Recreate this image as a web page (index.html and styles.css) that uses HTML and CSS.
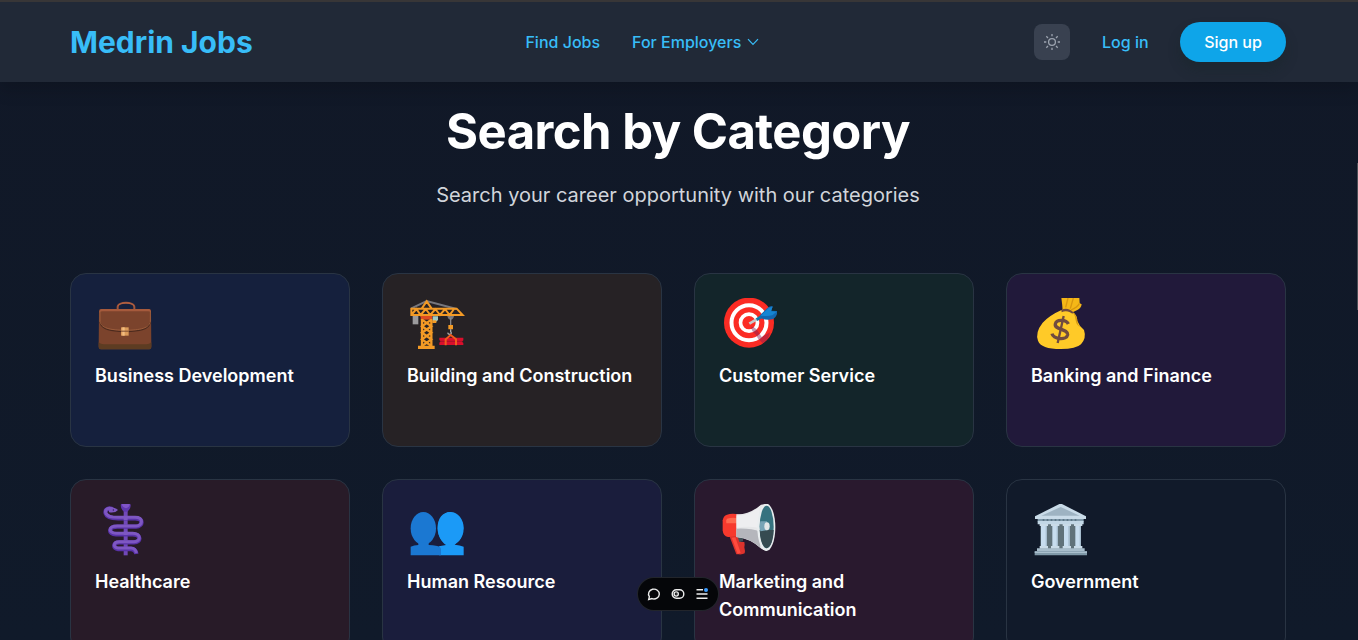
FILE: index.html
```html
<!DOCTYPE html>
<html lang="en">
<head>
<meta charset="utf-8">
<title>Medrin Jobs</title>
<link rel="stylesheet" href="styles.css">
</head>
<body>
<header class="header">
  <a class="logo">Medrin Jobs</a>
  <nav class="nav">
    <a>Find Jobs</a>
    <a class="employers">For Employers
      <svg class="chevron" viewBox="0 0 12 8"><path d="M1 1.2 6 6.4l5-5.2"/></svg>
    </a>
  </nav>
  <div class="actions">
    <button class="theme" aria-label="Theme">
      <svg viewBox="0 0 18 18"><circle cx="9" cy="9" r="3.4"/><path d="M9 1v2.3M9 14.7V17M1 9h2.3M14.7 9H17M3.3 3.3l1.7 1.7M13 13l1.7 1.7M3.3 14.7 5 13M13 5l1.7-1.7"/></svg>
    </button>
    <a class="login">Log in</a>
    <a class="signup">Sign up</a>
  </div>
</header>
<main class="main">
  <h1 class="title">Search by Category</h1>
  <p class="subtitle">Search your career opportunity with our categories</p>
  <section class="grid">
    <article class="card blue">
      <svg class="icon" viewBox="21 24 180 156">
        <path d="M89 60v-9c0-17 50-17 50 0v9" fill="none" stroke="#a3563a" stroke-width="6"/>
        <path d="M91 47c7-11 38-11 46 0" fill="none" stroke="#c0694a" stroke-width="2"/>
        <path d="M38 57h146q5 0 5 6l1 105q0 10-6 10H38q-6 0-6-10l1-105q0-6 5-6z" fill="#7b432c"/>
        <path d="M32 157q6 6 16 6h127q9 0 15-6v14q0 7-6 7H39q-7 0-7-7z" fill="#5d3c22"/>
        <path d="M34 68q0-11 7-11h141q7 0 7 11-3-4-9-4H44q-6 0-10 4z" fill="#a65a3c"/>
        <path d="M36 96c5 24 35 28 76 29 41-1 70-5 75-29" fill="none" stroke="#4c2a1d" stroke-width="4"/>
        <path d="M36 64v26c0 26 32 30 76 31 44-1 75-5 75-31V64" fill="none" stroke="#a2623f" stroke-width="2.5"/>
        <path d="M99 112h23v25H99z" fill="#dc9b5a"/><path d="M103 112h7v25h-7z" fill="#f4bd80"/><path d="M99 122h23v3H99z" fill="#7b4930"/>
      </svg>
      <h2>Business Development</h2>
    </article>
    <article class="card orange">
      <svg class="icon" viewBox="21 24 180 156">
        <path d="M34 55 80 33l90 24" fill="none" stroke="#77777d" stroke-width="6"/>
        <path d="M38 78h17v25H38z" fill="#9b9b9d"/><path d="M142 78h20q-2 11-10 11t-10-11z" fill="#77777b"/>
        <path d="M152 84v22" stroke="#88888b" stroke-width="4"/>
        <path d="M34 56h136l18 19H34zM34 75l15-18 13 18 15-18 14 18 15-18 14 18 15-18 14 18 13-18M65 56l15-22 15 22" fill="none" stroke="#f39a25" stroke-width="6"/>
        <path d="M62 78h35v11H62z" fill="#df4b20"/><path d="M98 79h16v10q-4 8-16 8z" fill="#9ecbc7"/><path d="M97 91h12v8H97z" fill="#f39a25"/>
        <path d="M66 87v82M94 87v82M66 89l28 20-28 19 28 20-28 20M94 89l-28 20 28 19-28 20 28 20" fill="none" stroke="#f39a25" stroke-width="7"/>
        <path d="M54 167h50v10H54zM145 105h14v13h-14z" fill="#f39a25"/>
        <path d="M152 118v7q5 7-3 8-6-1-5-5" fill="none" stroke="#aaa9aa" stroke-width="4"/>
        <path d="M118 143h72v8l-4 4 4 4v6h-72v-7l4-4-4-4z" fill="#d90f2c"/><path d="M122 154h65" stroke="#8e1328" stroke-width="2"/>
        <path d="M137 166v-18l15-13 16 13v18" fill="none" stroke="#f25b1d" stroke-width="6"/>
      </svg>
      <h2>Building and Construction</h2>
    </article>
    <article class="card green">
      <svg class="icon" viewBox="27 24 180 156">
        <circle cx="117" cy="98" r="75" fill="#fb2c24"/><circle cx="117" cy="98" r="52.5" fill="none" stroke="#fff" stroke-width="12"/><circle cx="117" cy="98" r="25.5" fill="none" stroke="#fff" stroke-width="11"/>
        <path d="M124 110q10 0 18 11l13 20 25-14q-4 22-22 33-14-10-22-28-12-8-12-22z" fill="#831d55" opacity=".45"/>
        <path d="m118 101 27-16" stroke="#c7c9ca" stroke-width="8"/><path d="m140 89 21-14" stroke="#087aae" stroke-width="9"/>
        <path d="m150 76 22-22q9-7 16-6l-4 14q9 0 17 1v9q-5 13-14 16-18 4-34-3z" fill="#1267b1"/><path d="m151 78 25-24 12-4-5 14 17 1-13 11q-16 4-30 1z" fill="#1685d3"/>
      </svg>
      <h2>Customer Service</h2>
    </article>
    <article class="card purple">
      <svg class="icon" viewBox="21 24 180 156">
        <path d="M112 23h54l1 17 6 3q-2 13-13 17l-17 8q-14-9-27-6-1-17-4-39z" fill="#f5b717"/>
        <path d="m132 24-7 28M148 24l-9 32M166 41q-7 12-25 19" stroke="#d89610" stroke-width="4" fill="none"/>
        <path d="M111 61q17-8 35 5 13 8 14 27 6 16 20 27 8 24-9 43-14 14-61 14-59 0-68-25-9-25 14-54 23-23 55-37z" fill="#ffca28"/>
        <path d="M146 67q14 10 14 27 1 11 9 17-12-5-14-20-1-14-9-24z" fill="#d79b13"/>
        <path d="M112 60q18-11 38 8-6 5-12-1-13-7-25 0z" fill="#704b40"/>
        <path d="M133 102c-6-14-36-15-39 0-4 18 39 14 37 32-3 17-42 15-47-3" fill="none" stroke="#704b40" stroke-width="10"/><path d="m119 78-18 81" fill="none" stroke="#704b40" stroke-width="7"/>
      </svg>
      <h2>Banking and Finance</h2>
    </article>
    <article class="card red">
      <svg class="icon" viewBox="21 24 180 156">
        <path d="M107 44h12v134h-12z" fill="#7148b8"/>
        <path d="M77 43c-13-11-27-3-24 9 4 13 19 15 37 15h51c27 0 24 24 3 25H88c-28 0-28 22-4 23h50c26 1 26 23 4 24H94c-19 0-20 19-4 20h39q14 1 16 15" fill="none" stroke="#5932a7" stroke-width="13"/>
        <path d="M77 42c-13-11-27-3-24 8 4 13 19 14 37 14h51c27 0 24 25 3 26H88c-28 0-28 21-4 22h50c26 1 26 24 4 25H94c-19 0-20 18-4 19h39q14 1 16 15" fill="none" stroke="#7e57c2" stroke-width="9"/>
        <path d="M99 24h28q4 12-9 23h-10q-12-10-9-23z" fill="#6038ae"/><path d="M102 24h23q1 8-11 13-13-4-12-13z" fill="#8055c7"/>
        <path d="M62 34q18-1 28 8-8 10-27 7z" fill="#7e57c2"/><circle cx="76" cy="42" r="2" fill="#311656"/><path d="M107 60h12v12h-12zM107 107h12v10h-12z" fill="#7e57c2"/>
      </svg>
      <h2>Healthcare</h2>
    </article>
    <article class="card indigo">
      <svg class="icon" viewBox="21 24 180 156">
        <path d="M151 48c-23 0-38 19-38 47 0 24 11 42 25 52l-21 4v27h74v-26q-11-5-27-6 26-18 26-51 0-30-39-47z" fill="#1b9af7"/><ellipse cx="152" cy="97" rx="39" ry="49" fill="#1b9af7"/>
        <ellipse cx="70" cy="97" rx="38" ry="49" fill="#1b78d2"/><path d="M55 140h31v7q26 1 34 6 4 5 3 11v14H32v-26q10-4 23-5z" fill="#1b78d2"/>
      </svg>
      <h2>Human Resource</h2>
    </article>
    <article class="card pink">
      <svg class="icon" viewBox="27 24 180 156">
        <path d="M59 122h26l7 16h11l1 8-1 8 2 11-1 7q-6 4-18 3H79q-8-22-20-53z" fill="#dd332d"/><path d="m65 125 11-1 16 46-9 4z" fill="#ff4b3e"/><path d="M83 122h16v14l-11 2z" fill="#455158"/>
        <path d="M51 56q14-5 35-1v67l-32 1q-15-3-16-20V73q2-13 13-17z" fill="#f7392d"/><path d="M51 68q17-5 31-1l-1 15H49q-2-11 2-14z" fill="#ff694f"/>
        <path d="M79 55q38 2 74-29l18-2v141l-16-6q-34-32-76-36z" fill="#e6e7e9"/><path d="M79 98q44-2 72 9v48q-34-30-72-32z" fill="#b5b6bc"/><path d="M80 59q40 1 70-29l-5 65q-30-6-65 0z" fill="#eeeef0"/>
        <ellipse cx="169" cy="94" rx="27" ry="71" fill="#e9edef"/><ellipse cx="170" cy="93" rx="21" ry="64" fill="#35727f"/>
        <path d="M149 102q2 48 21 55 19-7 21-55z" fill="#364b51"/><path d="M151 76h20v27l-20 3q-3-15 0-30z" fill="#78a4b6"/><ellipse cx="171" cy="91" rx="8" ry="12" fill="#e3e7e8"/>
      </svg>
      <h2>Marketing and Communication</h2>
    </article>
    <article class="card gray">
      <svg class="icon" viewBox="21 24 180 156">
        <path d="M49 80h121v79H49z" fill="#60727a"/><path d="m110 22 76 39v8H33v-8z" fill="#c9dbe8"/><path d="m110 33 57 26H52z" fill="#9eb3c2"/>
        <path d="M41 69h138v8H41z" fill="#819aab"/><path d="M41 75h138v10H41z" fill="#c2d7e6"/><path d="M56 72h107" stroke="#526b7b" stroke-width="5" stroke-dasharray="5 7"/>
        <path d="M51 84h18v68H51zM85 84h17v68H85zM120 84h17v68h-17zM154 84h17v68h-17z" fill="#c7ddef"/><path d="M67 88v64M100 88v64M135 88v64M169 88v64" stroke="#a6bdce" stroke-width="4"/>
        <path d="M47 84h25v6H47zM81 84h25v6H81zM116 84h25v6h-25zM150 84h25v6h-25zM47 150h25v8H47zM81 150h25v8H81zM116 150h25v8h-25zM150 150h25v8h-25z" fill="#c9dbe8"/>
        <path d="M39 157h143v9H39z" fill="#a8bdcb"/><path d="M32 165h157v13H32z" fill="#8099a8"/><path d="M32 167h157v3H32z" fill="#b8ccda"/>
      </svg>
      <h2>Government</h2>
    </article>
  </section>
</main>
<div class="toolbar">
  <svg viewBox="0 0 14 14"><path d="M1.7 12.5 2.4 9.7A5.4 4.9 0 1 1 5 11.6z"/></svg>
  <svg viewBox="0 0 14 14"><rect x="1.2" y="2.8" width="11.6" height="8.4" rx="4.2"/><circle cx="5.2" cy="7" r="2.1"/><path d="M5.2 6.7v.6"/></svg>
  <svg viewBox="0 0 14 14"><path d="M1.5 2.8H8M1.5 7h11M1.5 11.2h11"/><circle class="dot" cx="11" cy="3" r="2"/></svg>
</div>
<div class="scrollbar"></div>
</body>
</html>
```
FILE: styles.css
```css
* { box-sizing: border-box; }
body {
  margin: 0;
  height: 640px;
  overflow: hidden;
  background: linear-gradient(#111827, #101a2a);
  color: #fff;
  font-family: Inter, sans-serif;
}
.header {
  position: relative;
  display: flex;
  justify-content: space-between;
  align-items: center;
  height: 82px;
  padding: 0 72px 0 70px;
  border-top: 2px solid #383637;
  background: #212937;
  box-shadow: 0 8px 16px rgba(0, 0, 0, .16);
  color: #38bdf8;
  font-size: 16px;
  font-weight: 500;
}
.logo { font-size: 30px; font-weight: 700; line-height: 36px; }
.nav { display: flex; gap: 32px; margin-right: 2px; }
.employers { display: flex; align-items: center; gap: 6px; }
.chevron { width: 12px; height: 8px; fill: none; stroke: currentColor; stroke-width: 1.2; }
.actions { display: flex; justify-content: flex-end; align-items: center; gap: 32px; }
.login { width: 46px; white-space: nowrap; }
.theme {
  display: grid;
  place-items: center;
  width: 36px;
  height: 36px;
  padding: 0;
  border: 0;
  border-radius: 8px;
  background: #394150;
}
.theme svg { width: 18px; height: 18px; fill: none; stroke: #9ca3af; stroke-width: 1.3; }
.signup {
  width: 106px;
  height: 40px;
  border-radius: 20px;
  background: #0ea5e9;
  box-shadow: 0 8px 12px rgba(20, 38, 38, .35);
  color: #fff;
  line-height: 40px;
  text-align: center;
}
.main { padding: 26px 72px 0 70px; }
.title { margin: 0; font-size: 49px; font-weight: 700; line-height: 48px; letter-spacing: -.53px; text-align: center; }
.subtitle {
  margin: 25px 0 64px;
  color: #d1d5db;
  font-size: 20px;
  line-height: 28px;
  text-align: center;
}
.grid { display: grid; grid-template-columns: repeat(4, 280px); gap: 32px; }
.card { height: 174px; padding: 24px; border: 1px solid #293443; border-radius: 16px; }
.card h2 { margin: 12px 0 0; font-size: 18px; font-weight: 600; line-height: 28px; }
.icon { display: block; width: 60px; height: 52px; overflow: hidden; }
.blue { background: #15203d; }
.orange { background: #262225; }
.green { background: #13252a; }
.purple { background: #21193a; }
.red { background: #281b28; }
.indigo { background: #1a1d3c; }
.pink { background: #29192e; }
.gray { background: #111a2a; }
.toolbar {
  position: absolute;
  left: 638px;
  top: 578px;
  display: flex;
  align-items: center;
  justify-content: center;
  gap: 10px;
  width: 80px;
  height: 32px;
  border-radius: 16px;
  background: #050609;
  box-shadow: 0 0 0 1px #22252b;
}
.toolbar svg { width: 14px; height: 14px; fill: none; stroke: #ededed; stroke-width: 1.4; }
.toolbar .dot { fill: #3b9cff; stroke: none; }
.scrollbar {
  position: absolute;
  right: 0;
  top: 163px;
  width: 1px;
  height: 147px;
  background: #4b4f56;
}
```
